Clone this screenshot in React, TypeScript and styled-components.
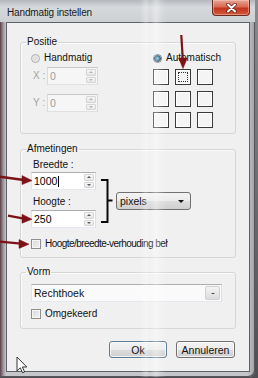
import React from 'react'
import styled, { createGlobalStyle, css } from 'styled-components'

const GlobalStyle = createGlobalStyle`
  html, body {
    margin: 0;
    padding: 0;
  }
  body {
    background: #5d5d61;
    font-family: 'Liberation Sans', Arial, sans-serif;
    font-size: 10px;
    color: #111;
  }
`

// Window chrome
const Screen = styled.div`
  position: relative;
  width: 258px;
  height: 378px;
  overflow: hidden;
  background: linear-gradient(180deg, #8a8b8f 0, #4f4f53 100%);
`

const Window = styled.div`
  position: relative;
  width: 255px;
  height: 377px;
  display: flex;
  flex-direction: column;
  border-radius: 0 6px 6px 0;
  background: linear-gradient(90deg, #5a3f47 0, #9a9096 3px, #c5c7cb 6px, #c3c5c9 97%, #9fa1a5 100%);
  box-shadow: inset -1px -1px 0 #55565a;

  &::after {
    content: '';
    position: absolute;
    inset: 0;
    pointer-events: none;
    background: linear-gradient(
      90deg,
      transparent 0,
      transparent 140px,
      rgba(255, 255, 255, 0.3) 146px,
      rgba(255, 255, 255, 0.1) 150px,
      rgba(255, 255, 255, 0.38) 156px,
      rgba(255, 255, 255, 0.12) 162px,
      transparent 167px
    );
  }
`

const TitleBar = styled.div`
  height: 22px;
  display: flex;
  justify-content: space-between;
  align-items: flex-start;
  background: linear-gradient(180deg, #b4b7bb 0, #d6d9dc 7px, #cdd0d3 22px);
`

const Title = styled.span`
  margin: 6px 0 0 7px;
  line-height: 14px;
  letter-spacing: -0.15px;
  color: #1a1a1a;
`

const CloseButton = styled.div`
  width: 38px;
  height: 16px;
  margin-right: 5px;
  display: flex;
  align-items: center;
  justify-content: center;
  box-sizing: border-box;
  border: 1px solid #6e2b22;
  border-top: none;
  border-radius: 0 0 4px 4px;
  background: linear-gradient(180deg, #e7a596 0, #d86a55 45%, #c2351f 55%, #cf5a3c 100%);
  box-shadow: inset 0 0 0 1px rgba(255, 210, 200, 0.45);
`

const Client = styled.div`
  flex: 1;
  margin: 0 5px 5px 6px;
  padding-top: 13px;
  display: flex;
  flex-direction: column;
  background: #f0f0f0;
  border: 1px solid #5e6166;
`

// Group boxes
const GroupBox = styled.fieldset<{ $gap: number; $bottom: number }>`
  margin: ${({ $gap }) => $gap}px 13px 0 13px;
  padding: 0 0 ${({ $bottom }) => $bottom}px 10px;
  min-width: 0;
  border: 1px solid #d6d6d6;
  border-radius: 3px;
  box-shadow: inset 1px 1px 0 #fbfbfb;
`

const Legend = styled.legend`
  margin-left: -5px;
  padding: 0 1px;
  line-height: 12px;
  color: #111;
`

const Row = styled.div<{ $top?: number }>`
  display: flex;
  align-items: center;
  margin-top: ${({ $top }) => $top || 0}px;
`

const Column = styled.div<{ $width?: number }>`
  display: flex;
  flex-direction: column;
  width: ${({ $width }) => ($width ? `${$width}px` : 'auto')};
`

const Text = styled.span<{ $muted?: boolean }>`
  line-height: 12px;
  color: ${({ $muted }) => ($muted ? '#a4a4a4' : '#111')};
`

const AxisLabel = styled(Text)`
  width: 16px;
  padding-left: 2px;
  box-sizing: border-box;
`

const FieldLabel = styled.div<{ $top?: number }>`
  line-height: 12px;
  padding-left: 2px;
  margin-top: ${({ $top }) => $top || 0}px;
`

// Radio and checkbox
const Radio = styled.span<{ $checked?: boolean }>`
  width: 9px;
  height: 9px;
  margin-right: 4px;
  border-radius: 50%;
  box-sizing: border-box;
  border: 1px solid ${({ $checked }) => ($checked ? '#4d6270' : '#a9acae')};
  background: ${({ $checked }) =>
    $checked
      ? 'radial-gradient(circle, #6fc3de 0, #1d6d8e 2px, #1e3a4c 3px, #dfe6ea 3.6px)'
      : 'radial-gradient(circle, #d6d8da 0, #eceeef 4px)'};
`

const CheckBox = styled.span`
  width: 10px;
  height: 10px;
  margin-right: 4px;
  box-sizing: border-box;
  border: 1px solid #8e8f8f;
  background: linear-gradient(135deg, #d7d8d9 0, #f3f3f3 100%);
  box-shadow: inset 0 0 0 1px #f6f6f6;
`

// The label runs past the group box in the original dialog and is cut off
const ClipLabel = styled.span<{ $width: number }>`
  width: ${({ $width }) => $width}px;
  overflow: hidden;
  white-space: nowrap;
  line-height: 12px;
  letter-spacing: -0.55px;
`

// Text fields with spinners
const Field = styled.div<{ $width: number; $disabled?: boolean }>`
  width: ${({ $width }) => $width}px;
  height: 18px;
  display: flex;
  align-items: stretch;
  box-sizing: border-box;
  border: 1px solid;
  border-color: ${({ $disabled }) =>
    $disabled ? '#c9c9c9 #dadada #e0e0e0 #dadada' : '#abadb3 #dbdfe6 #e3e9ef #e2e3ea'};
  background: ${({ $disabled }) => ($disabled ? '#f6f6f6' : '#fff')};
`

const FieldValue = styled.span<{ $disabled?: boolean }>`
  flex: 1;
  padding-left: 2px;
  line-height: 16px;
  font-size: 10.5px;
  color: ${({ $disabled }) => ($disabled ? '#9c9c9c' : '#000')};
`

const Caret = styled.span`
  display: inline-block;
  width: 1px;
  height: 11px;
  margin-left: 1px;
  vertical-align: -2px;
  background: #000;
`

const Spinner = styled.div`
  width: 10px;
  margin: 1px;
  display: flex;
  flex-direction: column;
  gap: 1px;
`

const SpinButton = styled.div<{ $down?: boolean; $disabled?: boolean }>`
  flex: 1;
  display: flex;
  align-items: center;
  justify-content: center;
  border: 1px solid #d5d5d5;
  border-radius: 1px;
  background: linear-gradient(180deg, #f7f7f7, #e6e6e6);

  &::before {
    content: '';
    border-left: 2.5px solid transparent;
    border-right: 2.5px solid transparent;
    ${({ $down, $disabled }) =>
      $down
        ? css`border-top: 2.5px solid ${$disabled ? '#b5b5b5' : '#5a5a5a'};`
        : css`border-bottom: 2.5px solid ${$disabled ? '#b5b5b5' : '#5a5a5a'};`}
  }
`

// Position grid
const AnchorGrid = styled.div`
  margin-top: 5px;
  display: grid;
  grid-template-columns: repeat(3, 16px);
  grid-auto-rows: 16px;
  column-gap: 6px;
  row-gap: 5.5px;
`

const AnchorCell = styled.div<{ $focus?: boolean }>`
  box-sizing: border-box;
  border: 1px solid #3a3a3a;
  background: #f4f4f4;
  box-shadow: inset 0 0 0 1px #fff;
  position: relative;

  ${({ $focus }) =>
    $focus &&
    css`
      &::after {
        content: '';
        position: absolute;
        inset: 2px;
        border: 1px dotted #333;
      }
    `}
`

// Drop-downs and buttons
const DropButton = styled.div<{ $width: number }>`
  width: ${({ $width }) => $width}px;
  height: 18px;
  box-sizing: border-box;
  display: flex;
  align-items: center;
  justify-content: space-between;
  padding: 0 6px 0 3px;
  border: 1px solid #707070;
  border-radius: 3px;
  background: linear-gradient(180deg, #f3f3f3 0, #ebebeb 50%, #dddddd 51%, #cfcfcf 100%);
  font-size: 10.5px;
`

const DownArrow = styled.span<{ $size?: number }>`
  border-left: ${({ $size }) => $size || 3.5}px solid transparent;
  border-right: ${({ $size }) => $size || 3.5}px solid transparent;
  border-top: ${({ $size }) => ($size || 3.5) * 0.9}px solid #111;
`

const ComboBox = styled.div`
  width: 191px;
  height: 18px;
  box-sizing: border-box;
  display: flex;
  align-items: stretch;
  border: 1px solid;
  border-color: #abadb3 #dbdfe6 #e3e9ef #e2e3ea;
  background: #fafafa;
`

const ComboText = styled.span`
  flex: 1;
  padding-left: 2px;
  line-height: 16px;
  font-size: 10.5px;
`

const ComboArrow = styled.div`
  width: 13px;
  margin: 1px;
  display: flex;
  align-items: center;
  justify-content: center;
  border: 1px solid #d0d0d0;
  border-radius: 2px;
  background: linear-gradient(180deg, #f4f4f4, #dcdcdc);
`

const ButtonRow = styled.div`
  margin: 12px 14px 0 0;
  display: flex;
  justify-content: flex-end;
  gap: 9px;
`

const Button = styled.div<{ $width: number; $default?: boolean }>`
  width: ${({ $width }) => $width}px;
  height: 17px;
  box-sizing: border-box;
  display: flex;
  align-items: center;
  justify-content: center;
  border: 1px solid ${({ $default }) => ($default ? '#5d7d96' : '#707070')};
  border-radius: 3px;
  background: linear-gradient(180deg, #f3f3f3 0, #ebebeb 50%, #dddddd 51%, #cfcfcf 100%);
  box-shadow: inset 0 0 0 1px rgba(255, 255, 255, 0.7);
  font-size: 10.5px;
  color: #111;
`

const Overlay = styled.svg`
  position: absolute;
  top: 0;
  left: 0;
  pointer-events: none;
`

const Spin: React.FC<{ disabled?: boolean }> = ({ disabled }) => (
  <Spinner>
    <SpinButton $disabled={disabled} />
    <SpinButton $down $disabled={disabled} />
  </Spinner>
)

const App: React.FC = () => (
  <>
    <GlobalStyle />
    <Screen>
      <Window>
        <TitleBar>
          <Title>Handmatig instellen</Title>
          <CloseButton>
            <svg width="11" height="10" viewBox="0 0 11 10">
              <path d="M2 1.5 L9 8.5 M9 1.5 L2 8.5" stroke="#5a1a12" strokeWidth="3.4" strokeLinecap="round" />
              <path d="M2 1.5 L9 8.5 M9 1.5 L2 8.5" stroke="#fff" strokeWidth="2" strokeLinecap="round" />
            </svg>
          </CloseButton>
        </TitleBar>

        <Client>
          <GroupBox $gap={0} $bottom={5}>
            <Legend>Positie</Legend>
            <Row style={{ alignItems: 'flex-start', marginTop: 4 }}>
              <Column $width={122}>
                <Row>
                  <Radio />
                  <Text>Handmatig</Text>
                </Row>
                <Row $top={3}>
                  <AxisLabel $muted>X :</AxisLabel>
                  <Field $width={51} $disabled>
                    <FieldValue $disabled>0</FieldValue>
                    <Spin disabled />
                  </Field>
                </Row>
                <Row $top={9}>
                  <AxisLabel $muted>Y :</AxisLabel>
                  <Field $width={51} $disabled>
                    <FieldValue $disabled>0</FieldValue>
                    <Spin disabled />
                  </Field>
                </Row>
              </Column>
              <Column>
                <Row>
                  <Radio $checked />
                  <Text>Automatisch</Text>
                </Row>
                <AnchorGrid>
                  {Array.from({ length: 9 }).map((_, i) => (
                    <AnchorCell key={i} $focus={i === 1} />
                  ))}
                </AnchorGrid>
              </Column>
            </Row>
          </GroupBox>

          <GroupBox $gap={9} $bottom={7}>
            <Legend>Afmetingen</Legend>
            <Row style={{ alignItems: 'flex-start', marginTop: 4 }}>
              <Column $width={65}>
                <FieldLabel>Breedte :</FieldLabel>
                <Field $width={65} style={{ marginTop: 1 }}>
                  <FieldValue>
                    1000
                    <Caret />
                  </FieldValue>
                  <Spin />
                </Field>
                <FieldLabel $top={6}>Hoogte :</FieldLabel>
                <Field $width={65} style={{ marginTop: 2 }}>
                  <FieldValue>250</FieldValue>
                  <Spin />
                </Field>
              </Column>
              <svg width="12" height="44" viewBox="0 0 12 44" style={{ marginTop: 20, marginLeft: 5 }}>
                <path d="M0 1 H6.5 V43 H0 M6.5 21.5 H11.5" fill="none" stroke="#0a0a0a" strokeWidth="2" />
              </svg>
              <DropButton $width={75} style={{ marginTop: 33, marginLeft: 3 }}>
                <span>pixels</span>
                <DownArrow />
              </DropButton>
            </Row>
            <Row $top={10}>
              <CheckBox />
              <ClipLabel $width={123}>Hoogte/breedte-verhouding behouden</ClipLabel>
            </Row>
          </GroupBox>

          <GroupBox $gap={8} $bottom={8}>
            <Legend>Vorm</Legend>
            <Row $top={6}>
              <ComboBox>
                <ComboText>Rechthoek</ComboText>
                <ComboArrow>
                  <DownArrow $size={2} />
                </ComboArrow>
              </ComboBox>
            </Row>
            <Row $top={6}>
              <CheckBox />
              <Text>Omgekeerd</Text>
            </Row>
          </GroupBox>

          <ButtonRow>
            <Button $width={58} $default>Ok</Button>
            <Button $width={59}>Annuleren</Button>
          </ButtonRow>
        </Client>
      </Window>

      <Overlay width="258" height="378" viewBox="0 0 258 378">
        <g fill="#7c1117" stroke="#7c1117">
          <path d="M181.3 35 L182.8 60" strokeWidth="2.2" fill="none" />
          <polygon points="178.6,58 187.4,58 183,68.5" strokeWidth="0.5" />
          <path d="M0 176.8 L24 180" strokeWidth="2.4" fill="none" />
          <polygon points="22,175.6 22,184.6 32,180.6" strokeWidth="0.5" />
          <path d="M8 215.6 L24 218.6" strokeWidth="2.4" fill="none" />
          <polygon points="22,214.2 22,223.2 32,219.2" strokeWidth="0.5" />
          <path d="M0 241.6 L21 243.6" strokeWidth="2.4" fill="none" />
          <polygon points="19,239.6 19,248.4 29,244.2" strokeWidth="0.5" />
        </g>
        <path
          d="M17 357 L17 371 L20.3 367.8 L22.6 372.8 L24.6 371.9 L22.4 367 L26.8 367 Z"
          fill="#fff"
          stroke="#222"
          strokeWidth="0.9"
          strokeLinejoin="round"
        />
      </Overlay>
    </Screen>
  </>
)

export default App
